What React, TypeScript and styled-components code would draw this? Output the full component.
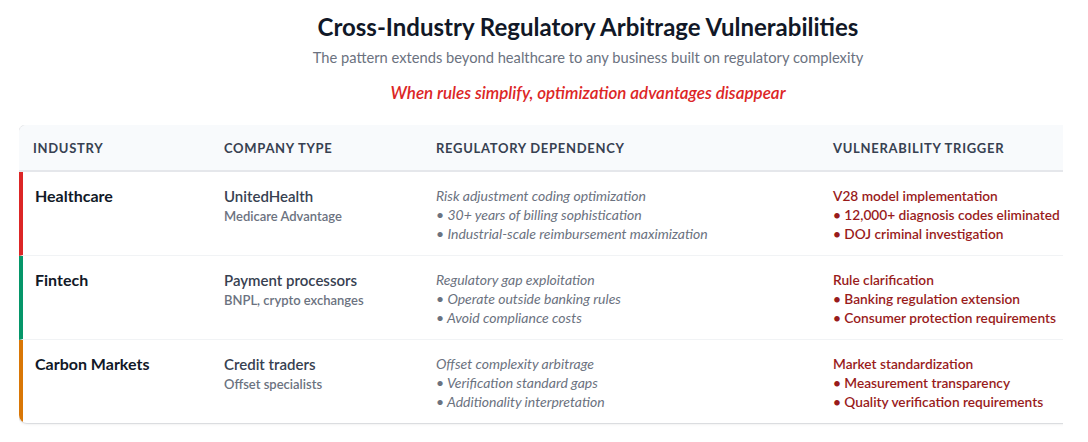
import React from "react";
import styled, { createGlobalStyle } from "styled-components";

const GlobalStyle = createGlobalStyle`
  html, body { margin: 0; padding: 0; background: #ffffff; overflow: hidden; }
  body { font-family: Lato, "Open Sans", "Noto Sans", sans-serif; }
`;

const Page = styled.div`
  padding: 12px 0 18px 19px;
  display: flex;
  flex-direction: column;
  align-items: stretch;
`;

const Heading = styled.header`
  padding-left: 69px;
  display: flex;
  flex-direction: column;
  align-items: center;
  text-align: center;
`;

const Title = styled.h1`
  margin: 0;
  font-size: 24px;
  line-height: 29px;
  font-weight: 700;
  color: #111827;
  white-space: nowrap;
`;

const Subtitle = styled.p`
  margin: 7px 0 0;
  font-size: 14.7px;
  line-height: 19px;
  color: #6b7280;
  white-space: nowrap;
`;

const Tagline = styled.p`
  margin: 15px 0 0;
  font-size: 17px;
  line-height: 21px;
  font-style: italic;
  font-weight: 600;
  color: #dc2626;
  white-space: nowrap;
`;

const Clip = styled.div`
  margin-top: 22px;
  width: 1044px;
  overflow: hidden;
  padding-bottom: 4px;
`;

const Card = styled.div`
  width: 1070px;
  border-radius: 8px;
  overflow: hidden;
  background: #ffffff;
  box-shadow: 0 1px 3px rgba(0, 0, 0, 0.1), 0 0 0 1px rgba(229, 231, 235, 0.8);
`;

const HeaderRow = styled.div`
  display: grid;
  grid-template-columns: 191px 212px 397px 1fr;
  background: #f8fafc;
  border-bottom: 2px solid #e5e7eb;
`;

const HeaderCell = styled.div`
  padding: 15px 14px 13px;
  font-size: 13px;
  line-height: 17px;
  font-weight: 700;
  letter-spacing: 0.7px;
  text-transform: uppercase;
  color: #374151;
`;

const Row = styled.div<{ $accent: string; $last?: boolean }>`
  display: grid;
  grid-template-columns: 187px 212px 397px 1fr;
  border-left: 4px solid ${(p) => p.$accent};
  border-bottom: ${(p) => (p.$last ? "none" : "1px solid #f1f3f5")};
`;

const Cell = styled.div<{ $pl?: number }>`
  padding: 14px 14px 12px ${(p) => p.$pl ?? 14}px;
  display: flex;
  flex-direction: column;
`;

const Industry = styled.div`
  font-size: 16px;
  line-height: 20px;
  font-weight: 700;
  color: #111827;
`;

const Company = styled.div`
  font-size: 15px;
  line-height: 20px;
  font-weight: 600;
  color: #374151;
`;

const CompanySub = styled.div`
  font-size: 13px;
  line-height: 20px;
  font-weight: 600;
  color: #6b7280;
`;

const DepLine = styled.div`
  font-size: 14px;
  line-height: 19px;
  font-style: italic;
  color: #6b7280;
`;

const TriggerLine = styled.div`
  font-size: 13.7px;
  line-height: 19px;
  font-weight: 600;
  color: #991b1b;
`;

type Item = {
  industry: string;
  accent: string;
  company: string;
  companySub: string;
  dep: string[];
  trigger: string[];
};

const rows: Item[] = [
  {
    industry: "Healthcare",
    accent: "#dc2626",
    company: "UnitedHealth",
    companySub: "Medicare Advantage",
    dep: [
      "Risk adjustment coding optimization",
      "• 30+ years of billing sophistication",
      "• Industrial-scale reimbursement maximization",
    ],
    trigger: [
      "V28 model implementation",
      "• 12,000+ diagnosis codes eliminated",
      "• DOJ criminal investigation",
    ],
  },
  {
    industry: "Fintech",
    accent: "#059669",
    company: "Payment processors",
    companySub: "BNPL, crypto exchanges",
    dep: [
      "Regulatory gap exploitation",
      "• Operate outside banking rules",
      "• Avoid compliance costs",
    ],
    trigger: [
      "Rule clarification",
      "• Banking regulation extension",
      "• Consumer protection requirements",
    ],
  },
  {
    industry: "Carbon Markets",
    accent: "#d97706",
    company: "Credit traders",
    companySub: "Offset specialists",
    dep: [
      "Offset complexity arbitrage",
      "• Verification standard gaps",
      "• Additionality interpretation",
    ],
    trigger: [
      "Market standardization",
      "• Measurement transparency",
      "• Quality verification requirements",
    ],
  },
];

export default function App() {
  return (
    <Page>
      <GlobalStyle />
      <Heading>
        <Title>Cross-Industry Regulatory Arbitrage Vulnerabilities</Title>
        <Subtitle>
          The pattern extends beyond healthcare to any business built on regulatory complexity
        </Subtitle>
        <Tagline>When rules simplify, optimization advantages disappear</Tagline>
      </Heading>
      <Clip>
        <Card>
          <HeaderRow>
            <HeaderCell>Industry</HeaderCell>
            <HeaderCell>Company Type</HeaderCell>
            <HeaderCell>Regulatory Dependency</HeaderCell>
            <HeaderCell>Vulnerability Trigger</HeaderCell>
          </HeaderRow>
          {rows.map((r, i) => (
            <Row key={r.industry} $accent={r.accent} $last={i === rows.length - 1}>
              <Cell $pl={12}>
                <Industry>{r.industry}</Industry>
              </Cell>
              <Cell>
                <Company>{r.company}</Company>
                <CompanySub>{r.companySub}</CompanySub>
              </Cell>
              <Cell>
                {r.dep.map((d) => (
                  <DepLine key={d}>{d}</DepLine>
                ))}
              </Cell>
              <Cell>
                {r.trigger.map((t) => (
                  <TriggerLine key={t}>{t}</TriggerLine>
                ))}
              </Cell>
            </Row>
          ))}
        </Card>
      </Clip>
    </Page>
  );
}
